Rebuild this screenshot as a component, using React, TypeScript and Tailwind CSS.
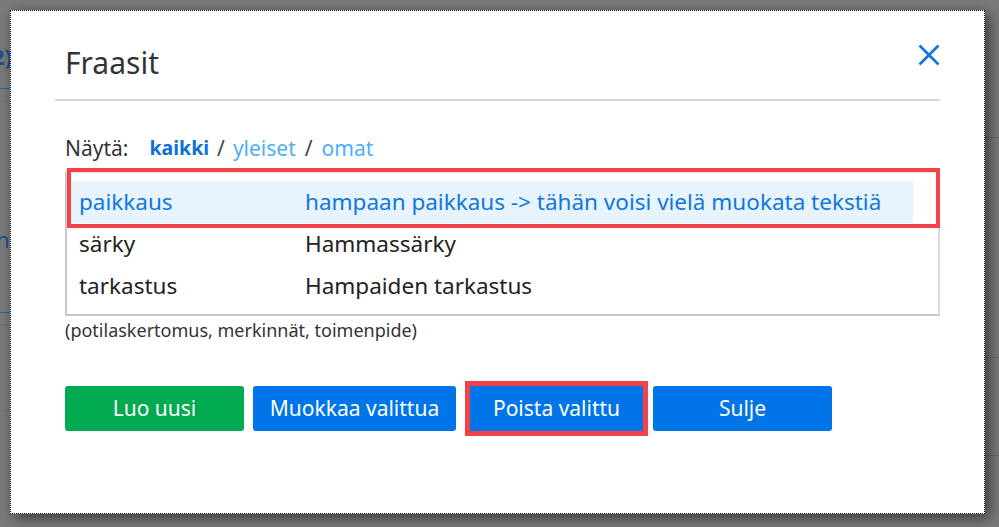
import React from "react";

const rows = [
  { key: "paikkaus", text: "hampaan paikkaus -> tähän voisi vielä muokata tekstiä", selected: true },
  { key: "särky", text: "Hammassärky", selected: false },
  { key: "tarkastus", text: "Hampaiden tarkastus", selected: false },
];

export default function App() {
  return (
    <div
      className="relative w-[999px] h-[527px] overflow-hidden bg-[#7b7b7b]"
      style={{ fontFamily: '"Noto Sans", "Open Sans", sans-serif' }}
    >
      {/* background page peeking out behind the dialog */}
      <div className="absolute left-[-8px] top-[45px] text-[22px] font-bold text-[#1d4f91] leading-none">2)</div>
      <div className="absolute left-0 top-[88px] w-[12px] h-px bg-[#2a5fa0]" />
      <div className="absolute left-0 top-[101px] w-[12px] h-px bg-[#6a6f75]" />
      <div className="absolute left-[-4px] top-[228px] text-[22px] text-[#1d4f91] leading-none">n</div>
      <div className="absolute left-0 top-[312px] w-[12px] h-px bg-[#2a5fa0]" />
      <div className="absolute left-0 top-[324px] w-[12px] h-px bg-[#6a6f75]" />
      <div className="absolute left-0 top-[410px] w-[12px] h-px bg-[#6a6f75]" />
      <div className="absolute right-0 top-[137px] w-[14px] h-px bg-[#666b70]" />
      <div className="absolute right-0 top-[357px] w-[14px] h-px bg-[#666b70]" />
      <div className="absolute right-0 top-[455px] w-[14px] h-px bg-[#666b70]" />

      {/* dialog */}
      <div className="absolute left-[10px] top-[10px] w-[975px] h-[504px] bg-white border border-dotted border-black shadow-[4px_4px_14px_rgba(0,0,0,0.55)]">
        <div className="px-[44px] pt-[30px]">
          <div className="flex items-start justify-between pl-[10px] h-[48px]">
            <h1 className="mt-[7px] text-[30px] text-[#333] leading-none font-normal">Fraasit</h1>
            <svg width="22" height="22" viewBox="0 0 22 22" className="mt-[3px]">
              <path d="M1.5 1.5 L20.5 20.5 M20.5 1.5 L1.5 20.5" stroke="#0d74e3" strokeWidth="2.6" strokeLinecap="butt" />
            </svg>
          </div>
          <div className="mt-[10px] h-[2px] bg-[#d4d9de]" />

          <div className="pl-[10px]">
            <div className="mt-[35px] flex items-center text-[21px] leading-none h-[24px]">
              <span className="text-[#333]">Näytä:</span>
              <span className="ml-[21px] text-[19.5px] font-bold text-[#0f6fd8]">kaikki</span>
              <span className="mx-[8px] text-[#444]">/</span>
              <span className="text-[#4db0f3]">yleiset</span>
              <span className="mx-[9px] text-[#444]">/</span>
              <span className="text-[#4db0f3]">omat</span>
            </div>

            <div className="mt-[11px] relative h-[145px] border-2 border-[#c3c9cf] border-t-[#e4e7ea] border-r-[#d7dbdf] pt-[8px] pl-[3px] pr-[25px]">
              {rows.map((r) => (
                <div
                  key={r.key}
                  className={`flex items-center h-[42px] text-[22.5px] ${
                    r.selected ? "bg-[#e7f3fd] text-[#1177e0]" : "text-[#222]"
                  }`}
                >
                  <span className="w-[235px] shrink-0 pl-[9px]">{r.key}</span>
                  <span className="whitespace-nowrap">{r.text}</span>
                </div>
              ))}
              {/* highlight marker */}
              <div className="absolute left-0 top-[-5px] w-[873px] h-[60px] border-[4px] border-[#f5424a] pointer-events-none" />
            </div>

            <div className="mt-[2px] text-[18px] text-[#333] leading-[24px]">(potilaskertomus, merkinnät, toimenpide)</div>

            <div className="mt-[39px] flex items-center text-[21px] text-white">
              <button className="w-[179px] h-[45px] rounded-[3px] bg-[#00aa50]">Luo uusi</button>
              <button className="ml-[9px] w-[203px] h-[45px] rounded-[3px] bg-[#0075e8]">Muokkaa valittua</button>
              <div className="ml-[9px] p-[5px] bg-[#f5424a]">
                <button className="block w-[173px] h-[45px] bg-[#0075e8]">Poista valittu</button>
              </div>
              <button className="ml-[5px] w-[179px] h-[45px] rounded-[3px] bg-[#0075e8]">Sulje</button>
            </div>
          </div>
        </div>
      </div>
    </div>
  );
}
